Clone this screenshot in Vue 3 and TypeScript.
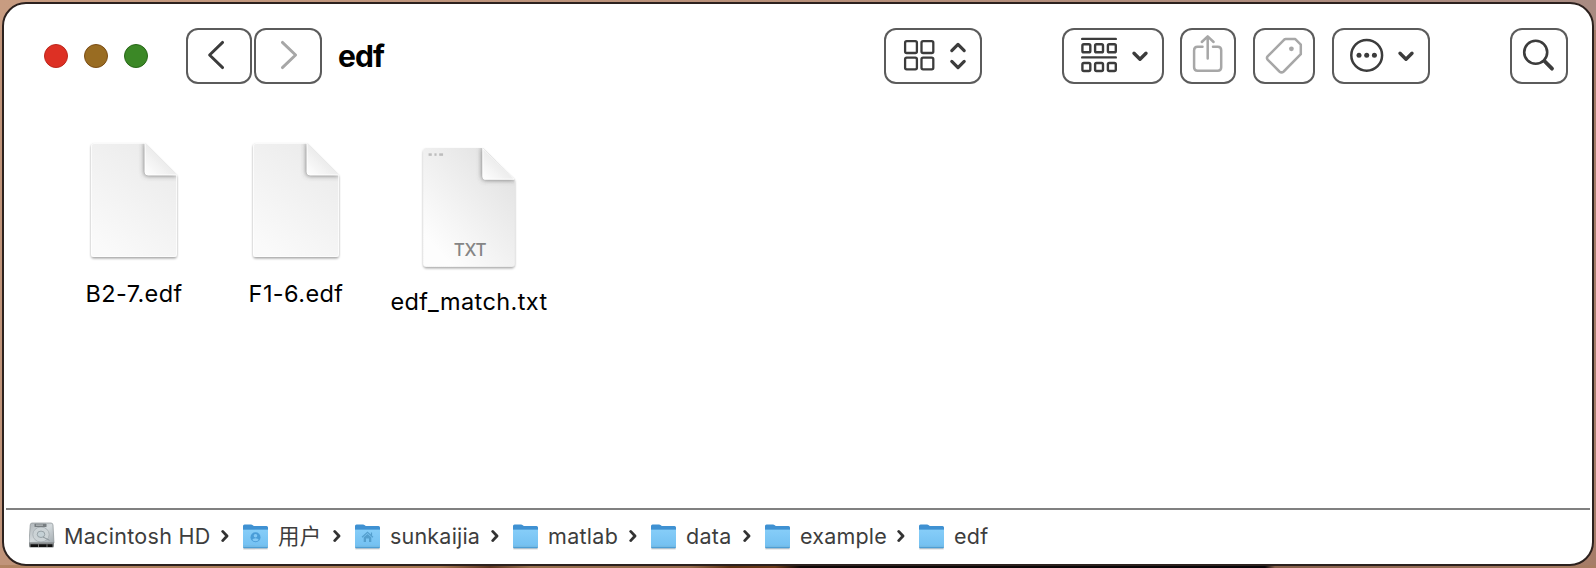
<script setup lang="ts">
interface FileItem {
  name: string
  kind: 'edf' | 'txt'
}
interface Crumb {
  label: string
  icon: 'disk' | 'folder' | 'users' | 'home'
  cls: string
}

const title = 'edf'
const files: FileItem[] = [
  { name: 'B2-7.edf', kind: 'edf' },
  { name: 'F1-6.edf', kind: 'edf' },
  { name: 'edf_match.txt', kind: 'txt' },
]
const crumbs: Crumb[] = [
  { label: 'Macintosh HD', icon: 'disk', cls: 'hd' },
  { label: '用户', icon: 'users', cls: 'cjk' },
  { label: 'sunkaijia', icon: 'home', cls: 'user' },
  { label: 'matlab', icon: 'folder', cls: 'matlab' },
  { label: 'data', icon: 'folder', cls: 'data' },
  { label: 'example', icon: 'folder', cls: 'example' },
  { label: 'edf', icon: 'folder', cls: 'edf' },
]

const outline = {
  edf: 'M3 1H54L86 33V112Q86 115 83 115H3Q0 115 0 112V4Q0 1 3 1Z',
  txt: 'M3 1H56L86 31V112Q86 115 83 115H3Q0 115 0 112V4Q0 1 3 1Z',
}
const fold = {
  edf: 'M54 1L86 33H57Q54 33 54 30Z',
  txt: 'M56 1L86 31H59Q56 31 56 28Z',
}
</script>

<template>
  <div class="desktop">
    <svg class="defs" width="0" height="0" aria-hidden="true">
      <defs>
        <linearGradient id="paper" x1="0.85" y1="0" x2="0.25" y2="1">
          <stop offset="0" stop-color="#eaeaea" />
          <stop offset="0.5" stop-color="#f2f2f2" />
          <stop offset="1" stop-color="#fafafa" />
        </linearGradient>
        <linearGradient id="paperTxt" x1="0.9" y1="0.1" x2="0.2" y2="0.9">
          <stop offset="0" stop-color="#e2e2e2" />
          <stop offset="1" stop-color="#fdfdfd" />
        </linearGradient>
        <linearGradient id="fold" x1="0" y1="1" x2="0.5" y2="0.5">
          <stop offset="0" stop-color="#ffffff" />
          <stop offset="1" stop-color="#ececec" />
        </linearGradient>
        <linearGradient id="folderFront" x1="0" y1="0" x2="0" y2="1">
          <stop offset="0" stop-color="#86cdf8" />
          <stop offset="1" stop-color="#74c1f2" />
        </linearGradient>
        <linearGradient id="metal" x1="0" y1="0" x2="1" y2="1">
          <stop offset="0" stop-color="#aeb4b8" />
          <stop offset="0.5" stop-color="#d3d9dc" />
          <stop offset="1" stop-color="#a3abb0" />
        </linearGradient>
        <filter id="soft" x="-40%" y="-40%" width="180%" height="180%">
          <feGaussianBlur stdDeviation="2.6" />
        </filter>
        <filter id="drop" x="-10%" y="-10%" width="120%" height="120%">
          <feDropShadow dx="0" dy="1.5" stdDeviation="1" flood-color="#000" flood-opacity="0.36" />
        </filter>
        <clipPath id="clip-edf">
          <path :d="outline.edf" />
        </clipPath>
        <clipPath id="clip-txt">
          <path :d="outline.txt" />
        </clipPath>
      </defs>
    </svg>

    <main class="window">
      <header class="toolbar">
        <div class="lights">
          <i class="light red"></i><i class="light amber"></i><i class="light green"></i>
        </div>
        <button class="btn back" aria-label="Back">
          <svg width="66" height="56"><path d="M36.6 14.4L23.6 27L36.6 39.6" stroke-width="2.9" /></svg>
        </button>
        <button class="btn forward pale" aria-label="Forward">
          <svg width="68" height="56"><path d="M28.4 14.4L41.6 27L28.4 39.6" stroke-width="2.9" /></svg>
        </button>
        <h1 class="title">{{ title }}</h1>
        <button class="btn view" aria-label="View">
          <svg width="98" height="56">
            <g stroke-width="2.3">
              <rect x="21.1" y="13.2" width="11.8" height="11.8" rx="1.6" />
              <rect x="37.5" y="13.2" width="11.8" height="11.8" rx="1.6" />
              <rect x="21.1" y="29.6" width="11.8" height="11.8" rx="1.6" />
              <rect x="37.5" y="29.6" width="11.8" height="11.8" rx="1.6" />
            </g>
            <path d="M67.8 22.6L74 16.4L80.2 22.6M67.8 33.4L74 39.6L80.2 33.4" stroke-width="3.2" />
          </svg>
        </button>
        <button class="btn group" aria-label="Group">
          <svg width="102" height="56">
            <path d="M20.2 10.9H53.8M20.2 29.4H53.8" stroke-width="2.4" />
            <g stroke-width="2.4">
              <rect v-for="x in [20.4, 33.1, 45.9]" :key="'a' + x" :x="x" y="16.3" width="7.9" height="8" rx="1.4" />
              <rect v-for="x in [20.4, 33.1, 45.9]" :key="'b' + x" :x="x" y="35" width="7.9" height="8" rx="1.4" />
            </g>
            <path d="M72 25.2L78 31.2L84 25.2" stroke-width="3.4" />
          </svg>
        </button>
        <button class="btn share pale" aria-label="Share">
          <svg width="56" height="56">
            <path d="M22.5 18.8H17.6Q14.1 18.8 14.1 22.3V39.2Q14.1 42.7 17.6 42.7H37.7Q41.2 42.7 41.2 39.2V22.3Q41.2 18.8 37.7 18.8H33M27.7 30.5V8.8M21.8 14L27.7 8.3L33.6 14" stroke-width="2.5" />
          </svg>
        </button>
        <button class="btn tag pale" aria-label="Tags">
          <svg width="62" height="56">
            <path d="M32.8 11.1H42.3L47.8 16.6V26.2L30.7 43.5Q28.5 45.3 26.4 43.5L14.8 31.9Q13.1 30 14.8 28.2L31 11.8Q31.8 11.1 32.8 11.1Z" stroke-width="2.5" />
            <circle class="solid" cx="38.4" cy="20.8" r="2.4" />
          </svg>
        </button>
        <button class="btn more" aria-label="More">
          <svg width="98" height="56">
            <circle cx="34.7" cy="27.3" r="15.4" stroke-width="2.5" />
            <circle v-for="x in [27, 34.7, 42.4]" :key="x" class="solid" :cx="x" cy="27.3" r="2.5" />
            <path d="M68 25.2L74 31.2L80 25.2" stroke-width="3.4" />
          </svg>
        </button>
        <button class="btn search" aria-label="Search">
          <svg width="58" height="56">
            <circle cx="25.7" cy="24.3" r="11.5" stroke-width="2.6" />
            <path d="M34.4 33L42 40.7" stroke-width="3.8" />
          </svg>
        </button>
      </header>

      <section class="files">
        <figure v-for="f in files" :key="f.name" class="file" :class="f.kind">
          <svg class="sheet" viewBox="-4 -2 94 124" preserveAspectRatio="none">
            <path
              :d="outline[f.kind]"
              :fill="f.kind === 'txt' ? 'url(#paperTxt)' : 'url(#paper)'"
              filter="url(#drop)"
            />
            <g :clip-path="`url(#clip-${f.kind})`">
              <path :d="fold[f.kind]" fill="#555" fill-opacity="0.8" stroke="#555" stroke-opacity="0.5" stroke-width="2" filter="url(#soft)" />
              <path :d="fold[f.kind]" fill="url(#fold)" stroke="#fff" stroke-width="1" />
            </g>
            <path v-if="f.kind === 'edf'" d="M3 1.5H54M85.5 33V112Q85.5 114.5 83 114.5H3Q0.5 114.5 0.5 112V4Q0.5 1.5 3 1.5" fill="none" stroke="#fff" stroke-opacity="0.7" />
            <g v-else fill="#bdbdbd">
              <rect x="5" y="6" width="3" height="2.4" /><rect x="10.5" y="6" width="2" height="2.4" /><rect x="15" y="6" width="3.6" height="2.4" />
            </g>
          </svg>
          <span v-if="f.kind === 'txt'" class="ext">TXT</span>
          <figcaption>{{ f.name }}</figcaption>
        </figure>
      </section>

      <nav class="pathbar">
        <div v-for="(c, i) in crumbs" :key="c.label" class="crumb" :class="'c-' + c.cls">
          <svg v-if="c.icon === 'disk'" class="icon" viewBox="0 0 26 28">
            <path d="M3 1H22Q23.8 1 24 3L25 21H0L1.2 3Q1.4 1 3 1Z" fill="url(#metal)" stroke="#8c9397" stroke-width="0.7" />
            <ellipse cx="12" cy="12.5" rx="8.2" ry="7.5" fill="#ccd3d6" stroke="#a3abb0" stroke-width="0.8" />
            <ellipse cx="12" cy="12.3" rx="3.8" ry="3.2" fill="#c5d1d6" stroke="#8b959a" stroke-width="0.8" />
            <path d="M14 15L20.5 18.3" stroke="#8b959a" stroke-width="1" />
            <rect x="5.5" y="1.8" width="12" height="3.2" rx="0.6" fill="#777d80" />
            <rect x="7" y="2.6" width="7" height="1" fill="#c5cacc" />
            <path d="M0 20.5H25V24Q25 25.5 23.5 25.5H1.5Q0 25.5 0 24Z" fill="#85898b" />
            <path d="M1.5 22.2H23.5V25H1.5Z" fill="#111" />
            <path d="M9.5 22.2V25M18 22.2V25" stroke="#777" />
          </svg>
          <svg v-else class="icon" viewBox="0 0 26 28">
            <path d="M0.3 26.6H24.7" stroke="#000" stroke-opacity="0.2" stroke-width="1.6" />
            <path d="M0 4Q0 2.5 1.5 2.5H8Q9 2.5 9.8 3.2L10.8 4H23.5Q25 4 25 5.5V20H0Z" fill="#3f91d2" />
            <path d="M0 7.5H25V25Q25 26.2 23.8 26.2H1.2Q0 26.2 0 25Z" fill="#4d9ed5" />
            <path d="M0 7.7H25V23.6H0Z" fill="url(#folderFront)" />
            <path d="M0 24.1H25" stroke="#9cdafa" stroke-width="0.8" />
            <g v-if="c.icon === 'users'">
              <circle cx="12.5" cy="15.2" r="5" fill="#4a9dd8" />
              <circle cx="12.5" cy="13.7" r="1.8" fill="#83c9f5" />
              <path d="M9.2 18Q9.8 16.2 12.5 16.2T15.8 18Q12.5 20.4 9.2 18Z" fill="#83c9f5" />
            </g>
            <g v-if="c.icon === 'home'" fill="none" stroke="#549fce">
              <path d="M7 15.3L12.5 10.3L18 15.3M16.5 10.5V13.5" stroke-width="1.2" />
              <path d="M8.7 15.2V20H11V16.5H14V20H16.3V15.2L12.5 12Z" fill="#549fce" stroke="none" />
            </g>
          </svg>
          <span class="label">{{ c.label }}</span>
          <svg v-if="i < crumbs.length - 1" class="chev" width="8" height="14">
            <path d="M1.7 2.4L6 7L1.7 11.6" />
          </svg>
        </div>
      </nav>
    </main>
  </div>
</template>

<style>
body {
  margin: 0;
}
</style>

<style scoped>
* {
  box-sizing: border-box;
}
.desktop {
  width: 1596px;
  height: 568px;
  padding: 2px;
  overflow: hidden;
  background:
    linear-gradient(90deg, #b18462 0, #a5764f 440px, #5b3520 490px, #99714e 530px, #94694a 690px, #5b3010 730px, #6b3a18 775px, #100806 800px, #080508 1265px, #86604a 1275px, #a87d62 1596px) bottom / 100% 3px no-repeat,
    linear-gradient(90deg, #c89c81 0, #b8907a 50%, #a98b82 100%) top / 100% 30px no-repeat,
    linear-gradient(90deg, #c0947a 0, #b78e72 50%, #a67c68 100%);
  font-family: Inter, 'Liberation Sans', 'Noto Sans CJK SC', sans-serif;
}
.defs {
  position: absolute;
}
.window {
  display: flex;
  flex-direction: column;
  width: 1592px;
  height: 564px;
  border: 2px solid #2c211e;
  border-radius: 24px;
  background: #fff;
  overflow: hidden;
}
.toolbar {
  display: flex;
  align-items: center;
  height: 104px;
  padding-left: 40px;
}
.lights {
  display: flex;
  gap: 16px;
  width: 142px;
}
.light {
  width: 24px;
  height: 24px;
  border-radius: 50%;
  border: 1.5px solid;
}
.red {
  background: #dd3024;
  border-color: #bd271c;
}
.amber {
  background: #996c22;
  border-color: #7b4d15;
}
.green {
  background: #3b8826;
  border-color: #286718;
}
.btn {
  flex: none;
  display: grid;
  height: 56px;
  padding: 0;
  border: 0;
  border-radius: 12px;
  background: #fff;
  box-shadow: inset 0 0 0 2px #5b5b5b;
  color: #3c3c3c;
}
.btn.pale {
  color: #a7a7a7;
}
.btn svg {
  display: block;
  fill: none;
  stroke: currentColor;
  stroke-linecap: round;
  stroke-linejoin: round;
}
.btn .solid {
  fill: currentColor;
  stroke: none;
}
.forward {
  margin-left: 2px;
}
.title {
  width: 562px;
  margin: 0;
  padding-left: 16px;
  font-size: 30px;
  line-height: 36px;
  font-weight: 700;
  letter-spacing: -0.9px;
  color: #000;
}
.group {
  margin-left: 80px;
}
.share {
  margin-left: 16px;
}
.tag {
  margin-left: 17px;
}
.more {
  margin-left: 17px;
}
.search {
  margin-left: 80px;
}
.files {
  flex: 1;
  display: grid;
  grid-template-columns: 162px 162px 184px;
  align-items: start;
  padding: 32px 0 0 49px;
}
.file {
  display: grid;
  justify-items: center;
  margin: 0;
}
.sheet {
  grid-area: 1 / 1;
  width: 94px;
  height: 124px;
}
.txt .sheet {
  width: 100px;
  height: 129px;
  margin-top: 5px;
}
.ext {
  grid-area: 1 / 1;
  align-self: end;
  margin: 0 0 14px 2px;
  font-size: 17px;
  line-height: 20px;
  font-weight: 500;
  letter-spacing: -0.3px;
  color: #858585;
}
figcaption {
  margin-top: 15px;
  font-size: 23.5px;
  line-height: 30px;
  letter-spacing: 0.4px;
  color: #000;
  white-space: nowrap;
}
.txt figcaption {
  margin-top: 13px;
}
.pathbar {
  display: grid;
  grid-template-columns: 214px 112px 158px 138px 114px 154px auto;
  align-items: start;
  height: 56px;
  margin: 0 2px;
  padding: 11px 0 0 23px;
  border-top: 2px solid #808080;
}
.crumb {
  display: flex;
  align-items: center;
  height: 30px;
  color: #3d3d3d;
}
.icon {
  flex: none;
  width: 26px;
  height: 28px;
  margin-right: 9px;
}
.label {
  flex: 1;
  font-size: 21.5px;
  line-height: 28px;
  letter-spacing: 0.3px;
  white-space: nowrap;
}
.c-user .label,
.c-example .label {
  letter-spacing: 0.2px;
}
.chev {
  flex: none;
  margin-right: 14px;
  fill: none;
  stroke: #333;
  stroke-width: 2.8;
  stroke-linecap: round;
  stroke-linejoin: round;
}
</style>
